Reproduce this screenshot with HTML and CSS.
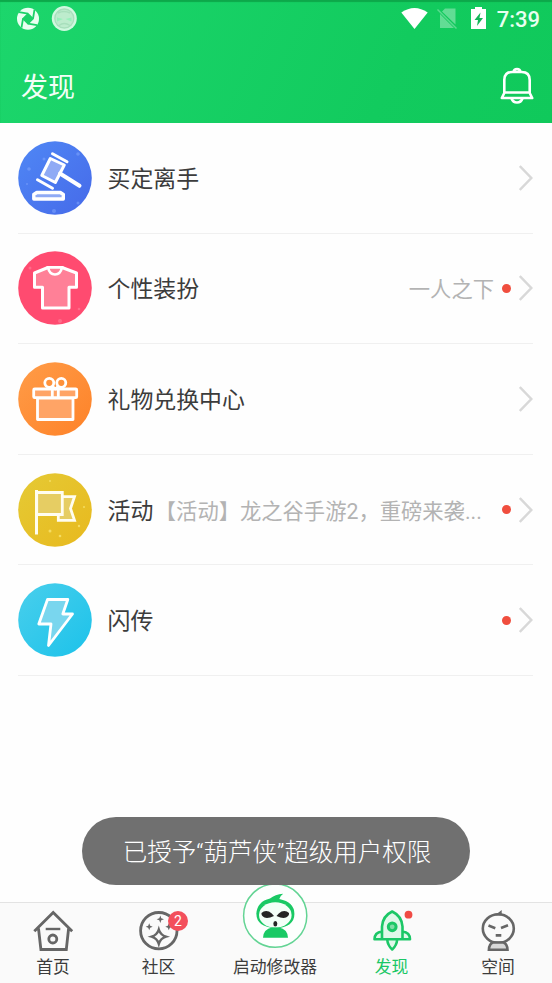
FILE: index.html
```html
<!DOCTYPE html>
<html lang="zh-CN">
<head>
<meta charset="utf-8">
<title>发现</title>
<link rel="stylesheet" href="styles.css">
</head>
<body>
<div class="app">
  <header class="header">
    <div class="status">
      <svg class="status-left" viewBox="0 0 78 38">
        <circle cx="28" cy="18.700" r="11" fill="#e9fff1"/>
        <g fill="#1bd169" stroke="#1bd169" stroke-width="1.500">
          <path d="M28 13.700l5 5-5 5-5-5z"/>
          <path d="M28 13.700l-9-1.500M33 18.700l1.500-9M28 23.700l9 1.500M23 18.700l-1.500 9" fill="none" stroke-width="1.800"/>
        </g>
        <circle cx="64.300" cy="18.500" r="12.500" fill="#d0f8df"/>
        <circle cx="64.300" cy="18.500" r="9.500" fill="#bdeccd" stroke="#a8dfbc" stroke-width="1.300"/>
        <path d="M58 13q6-3 12 0M59 25.500q5-4 11 0" fill="none" stroke="#a8dfbc" stroke-width="1.500"/>
        <path d="M57 17.500l6 1.500-6 2.500zM71.500 17.500l-6 1.500 6 2.500z" fill="#98f0bb"/>
      </svg>
      <div class="status-right">
        <svg class="status-icons" viewBox="400 0 90 38">
          <path d="M402.300 12.500Q415.500 3.500 428.700 12.500L415.500 29z" fill="#fff"/>
          <path d="M446 8.500h10.500v16L443 11.500zM441 14l14 14h-14z" fill="#fff" opacity=".34"/>
          <path d="M438.500 9.500l19 19" stroke="#fff" stroke-width="1.500" opacity=".3"/>
          <path d="M476 7h7v2h4v20h-15V9h4z" fill="#fff"/>
          <path d="M481.500 12.500l-6 7.500h3.500l-1 6 6-8h-3.500z" fill="#13b558"/>
        </svg>
        <span class="time">7:39</span>
      </div>
    </div>
    <div class="titlebar">
      <h1>发现</h1>
      <svg class="bell" viewBox="0 0 34 38" fill="none" stroke="#fff" stroke-width="2.600" stroke-linejoin="round" stroke-linecap="round">
        <path d="M13.500 5q.5-3 3.500-3t3.500 3M4.300 26V13q0-8 8-8h9.400q8 0 8 8v13l2.500 5H1.800l2.500-5zM4.500 25.500h25M11.500 31.500q1.500 4 5.500 4t5.500-4"/>
      </svg>
    </div>
  </header>

  <main class="list">
    <div class="row">
      <svg class="avatar" viewBox="0 0 74 74">
        <defs><linearGradient id="blue" x2="1" y2="1"><stop stop-color="#4f87f5"/><stop offset="1" stop-color="#466ae9"/></linearGradient></defs>
        <circle cx="37" cy="37" r="36.800" fill="url(#blue)"/>
        <g fill="#85aaff" opacity=".5"><circle cx="60" cy="13" r="1.800"/><circle cx="11" cy="28" r="1.800"/><circle cx="26" cy="18" r="1.500"/><circle cx="60" cy="62" r="1.500"/><circle cx="36" cy="70" r="2"/><circle cx="9" cy="43" r="1"/></g>
        <g stroke="#fff" stroke-width="3" stroke-linecap="round" stroke-linejoin="round" fill="none">
          <path d="M32.300 17.500l14 6.500-9 17.500-13.500-7z" fill="#8faaf5"/>
          <path d="M34.500 12.800l14.500 8M19.500 38.800l15 8.500"/>
          <path d="M42 32.500l19.500 12.300" stroke-width="4"/>
          <path d="M15.800 58v-4.500l3-2h23.500l3 2V58z" fill="#8faaf5" stroke-width="3.400"/>
        </g>
      </svg>
      <span class="label">买定离手</span>
      <svg class="chevron" viewBox="0 0 14 26"><path d="M.8 1l11.500 12L.8 25"/></svg>
    </div>
    <div class="row">
      <svg class="avatar" viewBox="0 0 74 74">
        <circle cx="37" cy="37" r="36.800" fill="#ff4b70"/>
        <g fill="#ff819b" opacity=".6"><circle cx="12" cy="17" r="1.500"/><circle cx="42" cy="70" r="2"/><circle cx="61" cy="58" r="1.300"/></g>
        <path d="M30 16.500L16.500 22v14.300h8V57H51V36.300h7.500V22L44 16.500z" fill="#ff8097" stroke="#fff" stroke-width="3" stroke-linejoin="round"/>
        <path d="M30 16.500q1.500 7 7 7t7-7z" fill="#ff8097" stroke="#fff" stroke-width="2.600"/>
      </svg>
      <span class="label">个性装扮</span>
      <span class="note">一人之下</span>
      <i class="dot"></i>
      <svg class="chevron" viewBox="0 0 14 26"><path d="M.8 1l11.500 12L.8 25"/></svg>
    </div>
    <div class="row">
      <svg class="avatar" viewBox="0 0 74 74">
        <defs><linearGradient id="orange" x2="1" y2="1"><stop stop-color="#ff9c48"/><stop offset="1" stop-color="#fe8228"/></linearGradient></defs>
        <circle cx="37" cy="37" r="36.800" fill="url(#orange)"/>
        <g stroke="#fff" stroke-width="2.800" stroke-linejoin="round" fill="#ffa466">
          <path d="M19.500 36h35.500v21.500H19.500z"/>
          <rect x="15.700" y="27" width="43" height="8.700" rx="1"/>
          <path d="M34.300 27v8.500M40.300 27v8.500"/>
          <circle cx="31.300" cy="20.800" r="4.500" fill="none"/><circle cx="43.300" cy="20.800" r="4.500" fill="none"/>
          <path d="M34 24l3.300 3 3.300-3" fill="none"/>
        </g>
      </svg>
      <span class="label">礼物兑换中心</span>
      <svg class="chevron" viewBox="0 0 14 26"><path d="M.8 1l11.500 12L.8 25"/></svg>
    </div>
    <div class="row">
      <svg class="avatar" viewBox="0 0 74 74">
        <defs><linearGradient id="gold" x2="1" y2="1"><stop stop-color="#e5ca35"/><stop offset="1" stop-color="#e8b91e"/></linearGradient></defs>
        <circle cx="37" cy="37" r="36.800" fill="url(#gold)"/>
        <g fill="#f5dc61"><circle cx="32" cy="58" r="1.500"/><circle cx="42" cy="63" r="1.300"/><circle cx="61" cy="53" r="1.200"/><circle cx="66" cy="34" r="1"/><circle cx="32" cy="8" r="1"/></g>
        <g stroke="#fffdf0" stroke-width="2.800">
          <path d="M44.300 23.700H56.500L52.500 35.500l4 11.800H40.300V41" fill="#e6cd63"/>
          <path d="M18.700 19.500h25.600v22H18.700z" fill="#e6cd63"/>
          <path d="M18.500 17v44.500" stroke-width="3"/>
        </g>
      </svg>
      <span class="label">活动</span>
      <span class="promo">【活动】龙之谷手游2，重磅来袭...</span>
      <i class="dot"></i>
      <svg class="chevron" viewBox="0 0 14 26"><path d="M.8 1l11.500 12L.8 25"/></svg>
    </div>
    <div class="row">
      <svg class="avatar" viewBox="0 0 74 74">
        <defs><linearGradient id="cyan" x2="1" y2="1"><stop stop-color="#49cfec"/><stop offset="1" stop-color="#1cc2ea"/></linearGradient></defs>
        <circle cx="37" cy="37" r="36.800" fill="url(#cyan)"/>
        <path d="M29.500 16.500h20.300L44.800 31h9.700L30.500 62.500 33 41H20.800z" fill="#79d6ee" stroke="#fff" stroke-width="2.800" stroke-linejoin="round"/>
      </svg>
      <span class="label">闪传</span>
      <i class="dot push"></i>
      <svg class="chevron" viewBox="0 0 14 26"><path d="M.8 1l11.500 12L.8 25"/></svg>
    </div>
  </main>

  <nav class="tabs">
    <div class="tab">
      <svg class="tab-icon" viewBox="0 0 44 44" fill="none" stroke="#666" stroke-width="2.800">
        <path d="M3.300 23.300L22.200 4.500l19 18.800M7.500 20.500l2.400 21h25.400l2.300-21"/>
        <path d="M14.700 21h14.600" stroke-width="2.400"/><circle cx="21.800" cy="31" r="4" stroke-width="2.800"/>
      </svg>
      <span>首页</span>
    </div>
    <div class="tab">
      <svg class="tab-icon" viewBox="0 0 44 44" fill="none" stroke="#666">
        <circle cx="21.800" cy="22.700" r="18.200" stroke-width="2.800"/>
        <path d="M21.800 21.500q1.700 5.500 7.200 7.200-5.500 1.700-7.200 7.200-1.700-5.500-7.200-7.200 5.500-1.700 7.200-7.200z" stroke-width="2.400"/>
        <path d="M23.300 7.500l1 2.700 2.700 1-2.700 1-1 2.700-1-2.700-2.700-1 2.700-1zM12.200 15.200l1 2.500 2.500 1-2.500 1-1 2.500-1-2.500-2.500-1 2.500-1zM31.800 15.200l1 2.500 2.500 1-2.500 1-1 2.500-1-2.500-2.500-1 2.500-1z" fill="#666" stroke="none"/>
      </svg>
      <b class="badge">2</b>
      <span>社区</span>
    </div>
    <div class="tab main">
      <svg class="launch" viewBox="0 0 66 66">
        <circle cx="33.200" cy="32.700" r="31.600" fill="#fdfffe" stroke="#63d494" stroke-width="1.500"/>
        <path d="M14.300 31Q15 18.500 28 15.500 33 11.500 41.200 10.800 37.500 13.500 37.300 16 52.400 19 52.400 31q0 13-19 14.500-19-2-19-14.500z" fill="#19c964"/>
        <ellipse cx="33.300" cy="32" rx="16.300" ry="12.700" fill="#f3fff8"/>
        <path d="M21 54.700Q21.500 46 30 44.500h7q8.500 1.500 9 10.200z" fill="#19c964"/>
        <g fill="#252525"><path d="M19.500 30q3-3 7.500-1.500 3 1.500 5 4.500-6 2.800-9.500 1.500-3.500-1.700-3-4.500zM47 30q-3-3-7.500-1.500-3 1.500-5 4.500 6 2.800 9.500 1.500 3.500-1.700 3-4.500z"/><ellipse cx="33.300" cy="40.700" rx="2" ry="2.700"/></g>
      </svg>
      <span>启动修改器</span>
    </div>
    <div class="tab active">
      <svg class="tab-icon" viewBox="0 0 44 44" fill="none" stroke="#1bc766" stroke-width="2.600" stroke-linejoin="round">
        <path d="M12 31.300V18.500Q12.700 8 22.200 3.500 31.700 8 32.500 18.500v12.800zM12 23.500q-7.500 1-7.500 7.800H12M32.500 23.500q7.500 1 7.500 7.800h-7.500M17.200 31.500q.5 6 5 10 4.500-4 5-10" fill="#dff8e9"/>
        <circle cx="22.200" cy="18.800" r="3.900" fill="#7fdca6" stroke-width="3"/>
        <circle cx="38.500" cy="6.700" r="3.900" fill="#f04b45" stroke="none"/>
      </svg>
      <span>发现</span>
    </div>
    <div class="tab">
      <svg class="tab-icon" viewBox="0 0 44 44" fill="none" stroke="#666" stroke-width="2.600">
        <ellipse cx="22.300" cy="20.600" rx="15.500" ry="14.300"/>
        <path d="M16 7.500q6-1.500 9.700-5.500v5.500z" fill="#666" stroke="none"/>
        <path d="M12.500 17.500l6.800 2.700M32 17.300l-7 2.700M19.700 27.400h5.600"/>
        <path d="M12.900 41.800q.3-6 4-7.300h10.600q3.700 1.300 4 7.300z" fill="#d8d8d8"/>
      </svg>
      <span>空间</span>
    </div>
  </nav>
  <div class="toast">已授予“葫芦侠”超级用户权限</div>
</div>
</body>
</html>
```
FILE: styles.css
```css
* {
  box-sizing: border-box;
}

body {
  margin: 0;
  font-family: Roboto, "Noto Sans CJK SC", sans-serif;
  color: #3c3c3c;
}

svg {
  display: block;
  flex: none;
}

.app {
  position: relative;
  display: flex;
  flex-direction: column;
  width: 552px;
  height: 983px;
  overflow: hidden;
  background: #fefefe;
}

.header {
  height: 123px;
  flex: none;
  color: #fff;
  background: linear-gradient(115deg, #1cd66c, #12cb5e 70%, #10c95b);
  box-shadow: inset 0 2px 1px #0da84a;
}

.status,
.status-right {
  display: flex;
  height: 38px;
  align-items: center;
  justify-content: space-between;
}

.status-left {
  width: 78px;
  height: 38px;
}

.status-right {
  padding-right: 12px;
  gap: 8px;
}

.status-icons {
  width: 90px;
  height: 38px;
}

.time {
  padding-top: 1px;
  font-size: 22px;
  line-height: 38px;
  font-weight: 500;
  color: #e8fff0;
}

.titlebar {
  display: flex;
  align-items: center;
  justify-content: space-between;
  height: 85px;
  padding: 11px 18px 0 21px;
}

h1 {
  margin: 0;
  font-size: 27px;
  line-height: 40px;
  font-weight: 400;
  color: #f3fff7;
  padding-top: 4px;
}

.bell {
  width: 34px;
  height: 38px;
}

.list {
  flex: 1;
  padding: 0 19px 0 18px;
}

.row {
  display: flex;
  align-items: center;
  height: 110.600px;
  border-bottom: 1px solid #f0f0f0;
}

.avatar {
  width: 74px;
  height: 74px;
}

.label {
  padding-top: 4px;
  margin-left: 15.500px;
  font-size: 22.900px;
  line-height: 34px;
  white-space: nowrap;
}

.note,
.promo {
  padding-top: 4px;
  font-size: 21.300px;
  line-height: 34px;
  color: #b3b3b3;
  white-space: nowrap;
}

.note {
  margin-left: auto;
}

.promo {
  flex: 1;
  padding-left: 1.500px;
}

.dot {
  flex: none;
  width: 9px;
  height: 9px;
  margin-left: 8px;
  border-radius: 50%;
  background: #f04e3e;
}

.push {
  margin-left: auto;
}

.chevron {
  width: 14px;
  height: 26px;
  margin-left: auto;
  fill: none;
  stroke: #d8d8d8;
  stroke-width: 2.500;
}

.dot + .chevron {
  margin-left: 8px;
}

.tabs {
  flex: none;
  display: grid;
  grid-template-columns: 106px 105px 128px 105px 108px;
  height: 81px;
  border-top: 1px solid #e3e3e3;
  background: #fafafa;
}

.tab {
  position: relative;
  display: flex;
  flex-direction: column;
  align-items: center;
  padding-top: 5px;
  font-size: 16.800px;
  line-height: 24px;
  white-space: nowrap;
}

.tab-icon {
  width: 44px;
  height: 44px;
  margin-bottom: 3px;
}

.active {
  color: #1bc766;
}

.launch {
  width: 66px;
  height: 66px;
  margin-top: -25px;
  margin-bottom: 6px;
}

.badge {
  position: absolute;
  top: 8px;
  left: 62px;
  width: 20px;
  height: 20px;
  border-radius: 50%;
  background: #f34f5c;
  color: #fff;
  font-size: 14px;
  font-weight: 400;
  line-height: 20px;
  text-align: center;
}

.toast {
  position: absolute;
  left: 82px;
  top: 817px;
  width: 388px;
  height: 68px;
  padding-left: 2px;
  border-radius: 34px;
  background: #707070;
  color: #fff;
  font-size: 24.500px;
  font-weight: 300;
  line-height: 71px;
  text-align: center;
  white-space: nowrap;
}
```
